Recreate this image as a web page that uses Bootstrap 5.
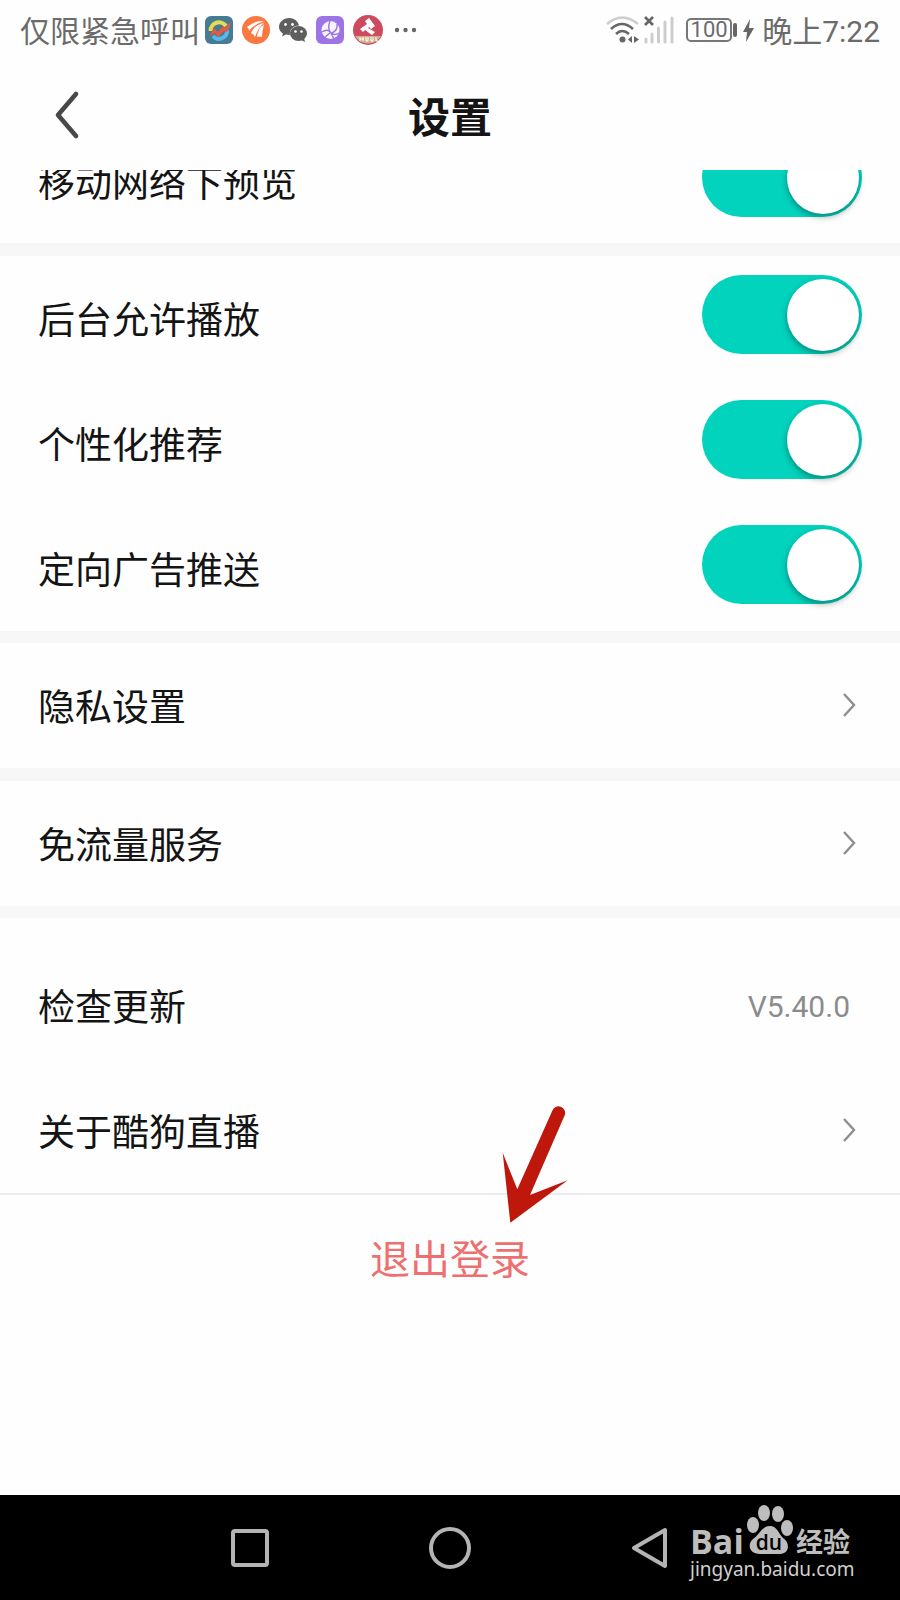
<!DOCTYPE html>
<html lang="zh-CN">
<head>
<meta charset="utf-8">
<meta name="viewport" content="width=device-width, initial-scale=1">
<title>设置</title>
<link href="https://cdn.jsdelivr.net/npm/bootstrap@5.3.0/dist/css/bootstrap.min.css" rel="stylesheet">
<style>
  body { font-family: Roboto, "Noto Sans CJK SC", sans-serif; color: #141414; background: #fefefe; }
  svg { display: block; flex-shrink: 0; }

  .status-bar { height: 60px; padding: 0 20px; font-size: 30px; line-height: 44px; color: #6b6b6b; }
  .status-text { padding-top: 3px; }
  .app-icons { gap: 9px; margin-left: 5px; }
  .battery { width: 46px; height: 24px; border: 2px solid #777; border-radius: 5px; font-size: 22px; line-height: 20px; }
  .battery-cap { width: 4px; height: 14px; border-radius: 2px; background: #666; margin: 0 6px 0 1px; }

  .title-bar { height: 110px; }
  .title-bar h1 { font-size: 42px; line-height: 60px; padding-top: 8px; }
  .back-btn { left: 37px; top: 20px; padding: 10px 17px; }

  .setting-row { height: 125px; padding: 0 38px; font-size: 37px; line-height: 56px; color: #141414; text-decoration: none; }
  /* the list is scrolled, so only the lower part of its first row shows */
  .scrolled-row { height: 73px; }
  .scrolled-row .setting-row { height: 122px; }
  .row-text { padding-top: 6px; }
  .section-gap { border-top: 13px solid #f7f7f7; }
  .section-gap-sm { border-top: 12px solid #f7f7f7; }
  .update-group { padding-top: 25px; border-bottom: 2px solid #ececec; }
  .chevron { margin: 0 4px 1px 0; }
  .version { font-size: 30px; color: #8c8c8c; margin-right: 12px; padding-top: 2px; }

  .form-check-input.toggle { position: relative; width: 160px; height: 79px; margin: 0 0 9px; border: 0; border-radius: 40px; background: #d9d9d9; cursor: pointer; }
  .form-check-input.toggle:checked { background: #02d3bd; }
  .toggle::before { content: ""; position: absolute; top: 4px; left: 4px; width: 72px; height: 72px; border-radius: 50%; background: #fff; box-shadow: 0 3px 6px rgba(0, 0, 0, .35); }
  .toggle:checked::before { left: auto; right: 3px; }

  .logout-btn { margin-top: 36px; font-size: 40px; line-height: 60px; color: #ec706f; }
  .pointer-arrow { left: calc(50% + 50px); top: -95px; pointer-events: none; }

  .nav-keys { height: 105px; gap: 156px; background: #000; }
  .nav-keys button { width: 44px; height: 44px; }
  .watermark { right: 50px; top: 8px; width: 160px; color: #bdbdbd; }
  .brand { height: 54px; }
  .brand-latin { font: 700 34px/32px "Open Sans", sans-serif; }
  .brand-cjk { font: 700 27px/32px "Noto Sans CJK SC", sans-serif; }
  .site { font: 400 19px/24px "Noto Sans", sans-serif; color: #d0d0d0; }
</style>
</head>
<body>
<div class="d-flex flex-column min-vh-100">

  <div class="status-bar d-flex align-items-center justify-content-between text-nowrap">
    <div class="d-flex align-items-center">
      <span class="status-text">仅限紧急呼叫</span>
      <div class="app-icons d-flex align-items-center">
        <svg width="28" height="28" viewBox="0 0 28 28"><rect width="28" height="28" rx="6" fill="#467b96"/><path d="M5.500 15a8.500 8.500 0 0 1 15.500-5" fill="none" stroke="#e7dc4d" stroke-width="4"/><path d="M22 14a8 8 0 0 1-14 6" fill="none" stroke="#58b9e8" stroke-width="4"/><path d="M4 21L9 12l4 4 5-6 2 2 7-7-5 11-3-1-6 6-3-4z" fill="#e8593f"/></svg>
        <svg width="28" height="28" viewBox="0 0 28 28"><circle cx="14" cy="14" r="14" fill="#fb7842"/><path d="M5 11Q13 4 22 5.500 12 8 7 15 7 12 5 11zM9 17Q12 9 22 7 16 12 13 21 12 18 9 17zM15 21Q16 12 22 8.500 20 15 20 21 18 20 15 21z" fill="#fff"/></svg>
        <svg width="28" height="28" viewBox="0 0 28 28"><path d="M10 2C4.500 2 0 6 0 11c0 3 1.500 5 4 6.500l-1 3 4-2 4 .5C10 14 14 9.500 20 9.500 19 5 15 2 10 2z" fill="#5e5e5e"/><ellipse cx="19.500" cy="17.500" rx="8.500" ry="7.500" fill="#5e5e5e"/><path d="M22 24l4 2-1-4z" fill="#5e5e5e"/><g fill="#fff"><circle cx="6.500" cy="8.500" r="1.400"/><circle cx="13.500" cy="8.500" r="1.400"/><circle cx="16.500" cy="15.500" r="1.300"/><circle cx="22.500" cy="15.500" r="1.300"/></g></svg>
        <svg width="28" height="28" viewBox="0 0 28 28"><rect width="28" height="28" rx="6" fill="#9c74e6"/><circle cx="14.500" cy="14" r="9" fill="#f7f4ff"/><path d="M14 5q-3 8 1 12 3 3 8 0M6 16q6-4 9 1l3 6M15 16l-7 6M21 8q1 6-5 9" fill="none" stroke="#9874df" stroke-width="1.400"/></svg>
        <svg width="30" height="30" viewBox="0 0 30 30"><circle cx="15" cy="15" r="15" fill="#cd4b5e"/><path d="M2 21h26a15 15 0 0 1-26 0z" fill="#ceb18c"/><path d="M7 14l7-5-2-3 4-3 6 8-4 3-2-2-1 1 7 4-3 3-7-5-2 2z" fill="#fff"/><path d="M7 22v4M10 22v4M7 24h4M13 22v4h2v-4M18 22v4h2v-4M23 22v4h2" stroke="#fff" fill="none"/></svg>
        <svg width="26" height="6" viewBox="0 0 26 6" fill="#666"><circle cx="5" cy="3" r="2.200"/><circle cx="13.500" cy="3" r="2.200"/><circle cx="22" cy="3" r="2.200"/></svg>
      </div>
    </div>
    <div class="d-flex align-items-center">
      <svg class="me-1" width="34" height="28" viewBox="0 0 34 28" fill="none" stroke-width="2.600"><path d="M1 8Q16-5 32 8" stroke="#cdcdcd"/><path d="M5 13Q16 3 27 13M10 18Q16 12 23 18" stroke="#666"/><circle cx="16.500" cy="23.500" r="3" fill="#666"/><path d="M26 20v7l-4-3.500zM28 20v7l5-3.500z" fill="#666"/></svg>
      <svg class="me-1" width="30" height="28" viewBox="0 0 30 28"><path d="M1 1l8 8M9 1l-8 8" stroke="#666" stroke-width="2.600"/><path d="M2 23v3M8 18v8M14.500 12v14M21 6v20M28 2v24" stroke="#cdcdcd" stroke-width="3" stroke-linecap="round"/></svg>
      <span class="battery ms-2 d-flex justify-content-center align-items-center">100</span><span class="battery-cap"></span>
      <svg width="11" height="23" viewBox="0 0 11 23" class="me-2"><path d="M7 0L0 13h4L3 23 11 9H6z" fill="#666"/></svg>
      <span class="status-text">晚上7:22</span>
    </div>
  </div>

  <header class="title-bar position-relative d-flex align-items-center justify-content-center">
    <button type="button" class="back-btn btn border-0 position-absolute" aria-label="返回">
      <svg width="26" height="50" viewBox="0 0 26 50"><path d="M22 4L4 25 22 46" fill="none" stroke="#484848" stroke-width="4.600" stroke-linecap="round" stroke-linejoin="round"/></svg>
    </button>
    <h1 class="mb-0 fw-bold">设置</h1>
  </header>

  <main class="flex-grow-1">
    <div class="scrolled-row overflow-hidden d-flex align-items-end">
      <div class="setting-row w-100 flex-shrink-0 d-flex align-items-center justify-content-between">
        <label class="row-text" for="previewSwitch">移动网络下预览</label>
        <input class="form-check-input toggle" type="checkbox" role="switch" id="previewSwitch" checked>
      </div>
    </div>

    <section class="section-gap">
      <div class="setting-row d-flex align-items-center justify-content-between">
        <label class="row-text" for="backgroundSwitch">后台允许播放</label>
        <input class="form-check-input toggle" type="checkbox" role="switch" id="backgroundSwitch" checked>
      </div>
      <div class="setting-row d-flex align-items-center justify-content-between">
        <label class="row-text" for="recommendSwitch">个性化推荐</label>
        <input class="form-check-input toggle" type="checkbox" role="switch" id="recommendSwitch" checked>
      </div>
      <div class="setting-row d-flex align-items-center justify-content-between">
        <label class="row-text" for="adSwitch">定向广告推送</label>
        <input class="form-check-input toggle" type="checkbox" role="switch" id="adSwitch" checked>
      </div>
    </section>

    <section class="section-gap-sm">
      <a href="#privacy" class="setting-row d-flex align-items-center justify-content-between">
        <span class="row-text">隐私设置</span>
        <svg class="chevron" width="16" height="26" viewBox="0 0 16 26"><path d="M2 2L12 13 2 24" fill="none" stroke="#8e8e8e" stroke-width="2.400"/></svg>
      </a>
    </section>

    <section class="section-gap">
      <a href="#data" class="setting-row d-flex align-items-center justify-content-between">
        <span class="row-text">免流量服务</span>
        <svg class="chevron" width="16" height="26" viewBox="0 0 16 26"><path d="M2 2L12 13 2 24" fill="none" stroke="#8e8e8e" stroke-width="2.400"/></svg>
      </a>
    </section>

    <section class="section-gap-sm update-group">
      <a href="#update" class="setting-row d-flex align-items-center justify-content-between">
        <span class="row-text">检查更新</span>
        <span class="version">V5.40.0</span>
      </a>
      <a href="#about" class="setting-row d-flex align-items-center justify-content-between">
        <span class="row-text">关于酷狗直播</span>
        <svg class="chevron" width="16" height="26" viewBox="0 0 16 26"><path d="M2 2L12 13 2 24" fill="none" stroke="#8e8e8e" stroke-width="2.400"/></svg>
      </a>
    </section>

    <div class="position-relative text-center">
      <button type="button" class="logout-btn btn border-0 p-0">退出登录</button>
      <svg class="pointer-arrow position-absolute" width="70" height="126" viewBox="0 0 70 126"><path d="M10.300 122.700L2.700 52.700 17.300 89.300 52.300 10.700A6.500 6.500 0 0 1 64.700 15.300L30 95 67.700 80.300z" fill="#bd180b"/></svg>
    </div>
  </main>

  <nav class="nav-keys position-relative d-flex align-items-center justify-content-center">
    <button type="button" class="btn border-0 p-0" aria-label="最近任务"><svg width="44" height="44" viewBox="0 0 44 44"><rect x="5" y="5" width="34" height="34" rx="2" fill="none" stroke="#b4b4b4" stroke-width="4"/></svg></button>
    <button type="button" class="btn border-0 p-0" aria-label="主页"><svg width="44" height="44" viewBox="0 0 44 44"><circle cx="22" cy="22" r="19" fill="none" stroke="#b4b4b4" stroke-width="4"/></svg></button>
    <button type="button" class="btn border-0 p-0" aria-label="返回上一页"><svg width="44" height="44" viewBox="0 0 44 44"><path d="M37 4v36L6 22z" fill="none" stroke="#b4b4b4" stroke-width="4" stroke-linejoin="round"/></svg></button>
    <div class="watermark position-absolute text-nowrap">
      <div class="brand d-flex align-items-end justify-content-between">
        <span class="brand-latin">Bai</span>
        <svg width="48" height="54" viewBox="0 0 48 54" fill="#bdbdbd"><ellipse cx="7" cy="22" rx="6" ry="8"/><ellipse cx="18" cy="10" rx="6" ry="8"/><ellipse cx="32" cy="11" rx="6" ry="8"/><ellipse cx="41" cy="25" rx="6" ry="8"/><path d="M24 23c7 0 9 8 13 12 7 4 7 16-3 16H14C3 51 1 41 7 36c7-5 9-13 17-13z"/><text x="23" y="47" text-anchor="middle" font-family="Open Sans, sans-serif" font-size="21" font-weight="600" fill="#000">du</text></svg>
        <span class="brand-cjk">经验</span>
      </div>
      <div class="site">jingyan.baidu.com</div>
    </div>
  </nav>
</div>
<script src="https://cdn.jsdelivr.net/npm/bootstrap@5.3.0/dist/js/bootstrap.bundle.min.js"></script>
</body>
</html>
